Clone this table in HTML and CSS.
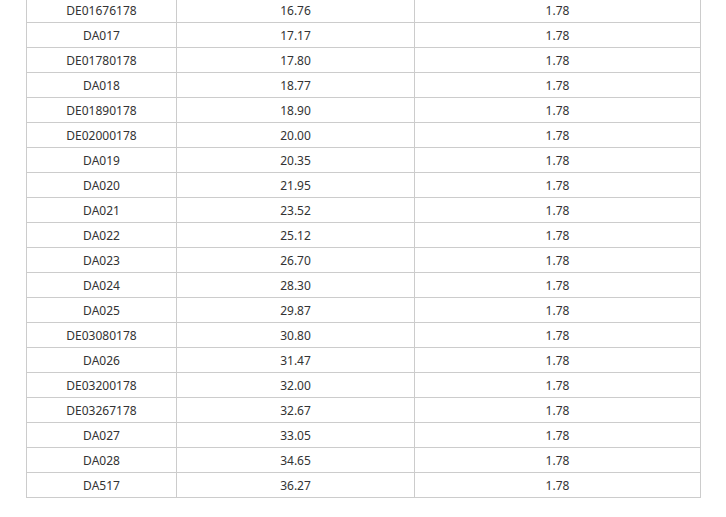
FILE: index.html
```html
<!DOCTYPE html>
<html>
<head>
<meta charset="utf-8">
<link rel="stylesheet" href="styles.css">
</head>
<body>
<div class="wrap">
<table class="grid">
<colgroup><col class="c1"><col class="c2"><col class="c3"></colgroup>
<tbody>
<tr><td>DE01676178</td><td>16.76</td><td>1.78</td></tr>
<tr><td>DA017</td><td>17.17</td><td>1.78</td></tr>
<tr><td>DE01780178</td><td>17.80</td><td>1.78</td></tr>
<tr><td>DA018</td><td>18.77</td><td>1.78</td></tr>
<tr><td>DE01890178</td><td>18.90</td><td>1.78</td></tr>
<tr><td>DE02000178</td><td>20.00</td><td>1.78</td></tr>
<tr><td>DA019</td><td>20.35</td><td>1.78</td></tr>
<tr><td>DA020</td><td>21.95</td><td>1.78</td></tr>
<tr><td>DA021</td><td>23.52</td><td>1.78</td></tr>
<tr><td>DA022</td><td>25.12</td><td>1.78</td></tr>
<tr><td>DA023</td><td>26.70</td><td>1.78</td></tr>
<tr><td>DA024</td><td>28.30</td><td>1.78</td></tr>
<tr><td>DA025</td><td>29.87</td><td>1.78</td></tr>
<tr><td>DE03080178</td><td>30.80</td><td>1.78</td></tr>
<tr><td>DA026</td><td>31.47</td><td>1.78</td></tr>
<tr><td>DE03200178</td><td>32.00</td><td>1.78</td></tr>
<tr><td>DE03267178</td><td>32.67</td><td>1.78</td></tr>
<tr><td>DA027</td><td>33.05</td><td>1.78</td></tr>
<tr><td>DA028</td><td>34.65</td><td>1.78</td></tr>
<tr><td>DA517</td><td>36.27</td><td>1.78</td></tr>
</tbody>
</table>
</div>
</body>
</html>
```
FILE: styles.css
```css
html, body {
  margin: 0;
  padding: 0;
  background: #fff;
}
.wrap {
  padding-left: 26px;
  margin-top: -3px;
}
.grid {
  border-collapse: collapse;
  table-layout: fixed;
  width: 674px;
  font-family: "Noto Sans", "Open Sans", sans-serif;
  font-size: 12px;
  color: #333;
}
.c1 { width: 150px; }
.c2 { width: 238px; }
.c3 { width: 286px; }
.grid td {
  border: 1px solid #ccc;
  height: 22px;
  padding: 2px 0 0;
  text-align: center;
  vertical-align: middle;
  line-height: 16px;
}
```
